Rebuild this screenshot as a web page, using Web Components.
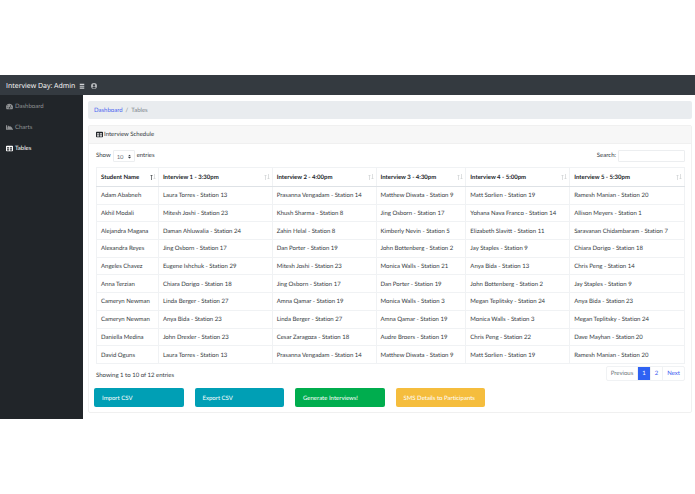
<!DOCTYPE html>
<html lang="en">
<head>
<meta charset="utf-8">
<title>Interview Day: Admin</title>
<style>
  body {
    margin: 0;
    padding: 75px 0;
    background: #fff;
    color: #343a40;
    font: 6px/10px Lato, "Open Sans", sans-serif;
    font-variant-ligatures: none;
    text-rendering: geometricPrecision;
  }
</style>
</head>
<body>
<admin-page>
  <admin-navbar slot="navbar">Interview Day: Admin</admin-navbar>
  <side-nav slot="sidebar">
    <side-link icon="gauge">Dashboard</side-link>
    <side-link icon="chart">Charts</side-link>
    <side-link icon="table" active>Tables</side-link>
  </side-nav>
  <bread-crumb current="Tables">Dashboard</bread-crumb>
  <data-card>
    <span slot="title">Interview Schedule</span>
    <table-controls></table-controls>
    <schedule-table></schedule-table>
    <table-footer></table-footer>
    <action-bar slot="actions">
      <action-button>Import CSV</action-button>
      <action-button>Export CSV</action-button>
      <action-button kind="success">Generate Interviews!</action-button>
      <action-button kind="warning">SMS Details to Participants</action-button>
    </action-bar>
  </data-card>
</admin-page>

<script>
const icons = {
  gauge: `<svg viewBox="0 0 18 16" aria-hidden="true"><path fill-rule="evenodd" d="M9 1a9 9 0 0 0-9 9c0 1.700.4 3.200 1.200 4.500.2.300.5.500.9.500h13.800c.4 0 .7-.2.9-.5A9 9 0 0 0 9 1zM3 12a1.100 1.100 0 1 1 0-2.200A1.100 1.100 0 0 1 3 12zm1.700-4.700a1.100 1.100 0 1 1 0-2.200 1.100 1.100 0 0 1 0 2.200zM12.800 5.200l-2.200 5.200a2.200 2.200 0 0 1 .2 2.600H7.200a2.200 2.200 0 0 1 2.200-3.100l2.300-5.200c.3-.7 1.400-.2 1.100.5zM15 12a1.100 1.100 0 1 1 0-2.200 1.100 1.100 0 0 1 0 2.200z"/></svg>`,
  chart: `<svg viewBox="0 0 18 16" aria-hidden="true"><path d="M0 2h3v9.500h15V14H0zM4 11V7l3-4 3 3 2-1 4 4v2z"/></svg>`,
  table: `<svg viewBox="0 0 18 16" aria-hidden="true"><path fill-rule="evenodd" d="M2 1h14a2 2 0 0 1 2 2v10a2 2 0 0 1-2 2H2a2 2 0 0 1-2-2V3a2 2 0 0 1 2-2zm.5 4v3H8V5zm7.500 0v3h5.500V5zM2.500 10v3H8v-3zm7.500 0v3h5.500v-3z"/></svg>`,
  bars: `<svg viewBox="0 0 16 16" aria-hidden="true"><path d="M2 2h12v3H2zM2 7h12v3H2zM2 12h12v3H2z"/></svg>`,
  user: `<svg viewBox="0 0 16 16" aria-hidden="true"><path fill-rule="evenodd" d="M8 0a8 8 0 1 1 0 16A8 8 0 0 1 8 0zm0 3a3 3 0 1 0 0 6 3 3 0 0 0 0-6zm-4.500 9.200a6 6 0 0 0 9 0c-.6-1.200-1.700-1.900-2.900-1.900H6.400c-1.200 0-2.300.7-2.900 1.900z"/></svg>`
};

function render(el, html) {
  el.attachShadow({ mode: 'open' }).innerHTML = html;
}

class AdminPage extends HTMLElement {
  connectedCallback() {
    render(this, `
      <style>
        :host { display: block; }
        .wrapper { display: grid; grid-template-columns: 83px minmax(0, 1fr); }
        main { padding: 6px 3px 6px 5px; }
      </style>
      <slot name="navbar"></slot>
      <div class="wrapper">
        <slot name="sidebar"></slot>
        <main><slot></slot></main>
      </div>
    `);
  }
}

class AdminNavbar extends HTMLElement {
  connectedCallback() {
    render(this, `
      <style>
        :host { display: block; background: #343a40; }
        nav { display: flex; align-items: center; height: 18px; padding: 2px 6px 0; gap: 4px; }
        a { color: #fff; font: 7px/11px "Open Sans", sans-serif; text-decoration: none; white-space: nowrap; }
        button { display: flex; padding: 0; border: 0; background: none; }
        .toggle { color: #d0d3d6; }
        .user { color: #b4b7ba; margin-left: 2px; }
        svg { width: 6px; height: 6px; fill: currentColor; }
      </style>
      <nav>
        <a href="#"><slot></slot></a>
        <button class="toggle" aria-label="Toggle sidebar">${icons.bars}</button>
        <button class="user" aria-label="Account">${icons.user}</button>
      </nav>
    `);
  }
}

class SideNav extends HTMLElement {
  connectedCallback() {
    render(this, `
      <style>
        :host { display: block; background: #212529; }
        nav { display: grid; padding-top: 1px; }
      </style>
      <nav><slot></slot></nav>
    `);
  }
}

class SideLink extends HTMLElement {
  connectedCallback() {
    render(this, `
      <style>
        :host { display: block; color: #909294; }
        :host([active]) { color: #fff; }
        a { display: flex; align-items: center; gap: 2px; height: 21px; padding: 0 6px; color: inherit; text-decoration: none; }
        svg { width: 7px; height: 7px; fill: currentColor; }
      </style>
      <a href="#">${icons[this.getAttribute('icon')]}<slot></slot></a>
    `);
  }
}

class BreadCrumb extends HTMLElement {
  connectedCallback() {
    render(this, `
      <style>
        :host { display: block; margin-bottom: 6px; background: #e9ecef; border-radius: 2px; }
        ol { display: flex; align-items: center; gap: 3px; height: 16px; margin: 0; padding: 2px 6px 0; list-style: none; color: #7c848b; }
        a { color: #4a62f0; text-decoration: none; }
      </style>
      <nav aria-label="Breadcrumb">
        <ol>
          <li><a href="#"><slot></slot></a></li>
          <li aria-hidden="true">/</li>
          <li>${this.getAttribute('current')}</li>
        </ol>
      </nav>
    `);
  }
}

class DataCard extends HTMLElement {
  connectedCallback() {
    render(this, `
      <style>
        :host { display: block; border: 1px solid #f0f0f0; border-radius: 2px; }
        header { display: flex; align-items: center; gap: 1px; height: 17px; padding: 0 7px; background: #f7f7f7; border-bottom: 1px solid #f0f0f0; }
        svg { width: 7px; height: 7px; fill: #212529; }
        .body { padding: 6px 6px 0 7px; }
        .actions { padding: 7px 5px 5px; }
      </style>
      <header>${icons.table}<slot name="title"></slot></header>
      <div class="body"><slot></slot></div>
      <div class="actions"><slot name="actions"></slot></div>
    `);
  }
}

class TableControls extends HTMLElement {
  connectedCallback() {
    render(this, `
      <style>
        :host { display: flex; justify-content: space-between; margin-bottom: 5px; }
        label { display: flex; align-items: center; gap: 2px; line-height: 12px; }
        select, input { box-sizing: border-box; height: 12px; margin: 0; border: 1px solid #eceef0; border-radius: 1px; background: #fff; color: #6c757d; font: inherit; outline: 0; }
        select { width: 22px; padding: 0 3px; appearance: none; }
        input { width: 67px; padding: 0 3px; }
        .select { display: grid; align-items: center; }
        .select > * { grid-area: 1 / 1; }
        svg { width: 3px; height: 5px; justify-self: end; margin-right: 4px; fill: #343a40; pointer-events: none; }
      </style>
      <label>Show
        <span class="select">
          <select><option>10</option><option>25</option><option>50</option><option>100</option></select>
          <svg viewBox="0 0 4 5" aria-hidden="true"><path d="M2 0L0 2h4zm0 5L0 3h4z"/></svg>
        </span>
        entries</label>
      <label>Search: <input type="search"></label>
    `);
  }
}

const columns = [
  ['Student Name', 62], ['Interview 1 - 3:30pm', 114], ['Interview 2 - 4:00pm', 104],
  ['Interview 3 - 4:30pm', 90], ['Interview 4 - 5:00pm', 104], ['Interview 5 - 5:30pm', 115]
];

const rows = [
  ['Adam Ababneh', 'Laura Torres - Station 13', 'Prasanna Vengadam - Station 14', 'Matthew Diwata - Station 9', 'Matt Sorlien - Station 19', 'Ramesh Manian - Station 20'],
  ['Akhil Modali', 'Mitesh Joshi - Station 23', 'Khush Sharma - Station 8', 'Jing Osborn - Station 17', 'Yohana Nava Franco - Station 14', 'Allison Meyers - Station 1'],
  ['Alejandra Magana', 'Daman Ahluwalia - Station 24', 'Zahin Helal - Station 8', 'Kimberly Nevin - Station 5', 'Elizabeth Slavitt - Station 11', 'Saravanan Chidambaram - Station 7'],
  ['Alexandra Reyes', 'Jing Osborn - Station 17', 'Dan Porter - Station 19', 'John Bottenberg - Station 2', 'Jay Staples - Station 9', 'Chiara Dorigo - Station 18'],
  ['Angeles Chavez', 'Eugene Ishchuk - Station 29', 'Mitesh Joshi - Station 23', 'Monica Walls - Station 21', 'Anya Bida - Station 13', 'Chris Peng - Station 14'],
  ['Anna Terzian', 'Chiara Dorigo - Station 18', 'Jing Osborn - Station 17', 'Dan Porter - Station 19', 'John Bottenberg - Station 2', 'Jay Staples - Station 9'],
  ['Cameryn Newman', 'Linda Berger - Station 27', 'Amna Qamar - Station 19', 'Monica Walls - Station 3', 'Megan Teplitsky - Station 24', 'Anya Bida - Station 23'],
  ['Cameryn Newman', 'Anya Bida - Station 23', 'Linda Berger - Station 27', 'Amna Qamar - Station 19', 'Monica Walls - Station 3', 'Megan Teplitsky - Station 24'],
  ['Daniella Medina', 'John Drexler - Station 23', 'Cesar Zaragoza - Station 18', 'Audre Broers - Station 19', 'Chris Peng - Station 22', 'Dave Mayhan - Station 20'],
  ['David Oguns', 'Laura Torres - Station 13', 'Prasanna Vengadam - Station 14', 'Matthew Diwata - Station 9', 'Matt Sorlien - Station 19', 'Ramesh Manian - Station 20']
];

class ScheduleTable extends HTMLElement {
  connectedCallback() {
    const total = columns.reduce((sum, col) => sum + col[1], 0);
    const cols = columns.map(col => `<col style="width: ${col[1] / total * 100}%">`).join('');
    const head = columns.map((col, i) => `
      <th scope="col"><div>${col[0]}
        <svg class="${i === 0 ? 'sorted' : ''}" viewBox="0 0 6 6" aria-hidden="true">
          <path class="up" d="M1.500 6V1M.5 2l1-1 1 1"/><path class="down" d="M4.500 0v5M3.500 4l1 1 1-1"/>
        </svg></div></th>`).join('');
    const body = rows.map(row => `<tr>${row.map(cell => `<td>${cell}</td>`).join('')}</tr>`).join('');
    render(this, `
      <style>
        :host { display: block; }
        table { width: 100%; height: 197px; table-layout: fixed; border-collapse: collapse; }
        th, td { padding: 2px 4px 0; border: 1px solid #f0f2f4; text-align: left; white-space: nowrap; }
        thead tr { height: 19px; }
        th { padding-right: 2px; border-bottom-color: #dee2e6; color: #212529; font-weight: 700; }
        th div { display: flex; align-items: center; justify-content: space-between; }
        svg { width: 6px; height: 6px; margin-bottom: 2px; fill: none; stroke: #cfd1d3; stroke-width: 0.7; }
        .sorted .up { stroke: #43474b; }
      </style>
      <table>
        <colgroup>${cols}</colgroup>
        <thead><tr>${head}</tr></thead>
        <tbody>${body}</tbody>
      </table>
    `);
  }
}

class TableFooter extends HTMLElement {
  connectedCallback() {
    render(this, `
      <style>
        :host { display: flex; justify-content: space-between; align-items: center; margin-top: 2px; }
        .info { padding-top: 5px; }
        ul { display: flex; margin: 0; padding: 0; list-style: none; border: 1px solid #f0f2f4; border-radius: 2px; }
        li + li { border-left: 1px solid #f0f2f4; }
        a { display: block; padding: 0 4px; line-height: 13px; color: #3d5cf0; text-decoration: none; }
        .disabled { color: #6c757d; }
        .active { background: #2f62f3; color: #fff; }
      </style>
      <div class="info">Showing 1 to 10 of 12 entries</div>
      <nav aria-label="Table pages">
        <ul>
          <li><a class="disabled" href="#">Previous</a></li>
          <li><a class="active" href="#">1</a></li>
          <li><a href="#">2</a></li>
          <li><a href="#">Next</a></li>
        </ul>
      </nav>
    `);
  }
}

class ActionBar extends HTMLElement {
  connectedCallback() {
    render(this, `
      <style>
        :host { display: grid; grid-template-columns: repeat(6, minmax(0, 1fr)); gap: 11px; }
      </style>
      <slot></slot>
    `);
  }
}

class ActionButton extends HTMLElement {
  connectedCallback() {
    render(this, `
      <style>
        :host { display: block; --fill: #009fb5; }
        :host([kind="success"]) { --fill: #00ad4e; }
        :host([kind="warning"]) { --fill: #f5bd3d; }
        button { display: block; width: 100%; height: 19px; padding: 2px 8px 0; border: 0; border-radius: 2px; background: var(--fill); color: #fff; font: inherit; text-align: left; text-rendering: inherit; white-space: nowrap; }
      </style>
      <button type="button"><slot></slot></button>
    `);
  }
}

customElements.define('admin-page', AdminPage);
customElements.define('admin-navbar', AdminNavbar);
customElements.define('side-nav', SideNav);
customElements.define('side-link', SideLink);
customElements.define('bread-crumb', BreadCrumb);
customElements.define('data-card', DataCard);
customElements.define('table-controls', TableControls);
customElements.define('schedule-table', ScheduleTable);
customElements.define('table-footer', TableFooter);
customElements.define('action-bar', ActionBar);
customElements.define('action-button', ActionButton);
</script>
</body>
</html>
